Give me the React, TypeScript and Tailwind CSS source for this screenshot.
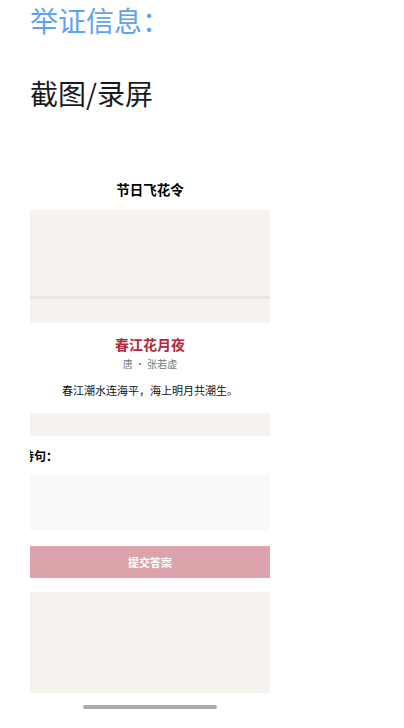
export default function App() {
    return (
        <div
            className="min-h-[728px] bg-white pl-[30px]"
            style={{ fontFamily: '"Noto Sans CJK SC", "Noto Sans", sans-serif' }}
        >
            <h1 className="text-[28px] leading-[40px] text-[#5da2f5]">举证信息：</h1>
            <p className="mt-[33px] text-[28px] leading-[40px] text-[#1a1a1a]">截图/录屏</p>

            {/* Embedded screenshot */}
            <div className="mt-[66px] w-[240px] overflow-hidden">
                <div className="text-center text-[13.5px] font-bold leading-[20px] text-black">节日飞花令</div>
                <div className="mt-[11px] h-[86px] bg-[#f6f3ef]" />
                <div className="h-[3px] bg-[#e6e6ea]" />
                <div className="h-[24px] bg-[#f6f3ef]" />

                <div className="flex h-[90px] flex-col items-center">
                    <div className="mt-[11px] text-[14px] font-bold leading-[20px] text-[#b3283c]">春江花月夜</div>
                    <div className="text-[10px] leading-[20px] text-[#777]">唐 · 张若虚</div>
                    <div className="mt-[6px] text-[11px] leading-[20px] text-[#111]">春江潮水连海平，海上明月共潮生。</div>
                </div>
                <div className="h-[23px] bg-[#f6f3ef]" />

                <div className="ml-[-8px] mt-[11px] text-[12px] font-bold leading-[18px] text-black">诗句：</div>
                <div className="mt-[10px] h-[56px] bg-[#f8f9fa]" />
                <button className="mt-[15px] flex h-[32px] w-full items-center justify-center bg-[#dca3ab] text-[11px] font-bold text-white">
                    提交答案
                </button>
                <div className="mt-[14px] h-[101px] bg-[#f6f3ef]" />
                <div className="mx-auto mt-[12px] h-[4px] w-[134px] rounded-full bg-[#ababab]" />
            </div>
        </div>
    );
}
